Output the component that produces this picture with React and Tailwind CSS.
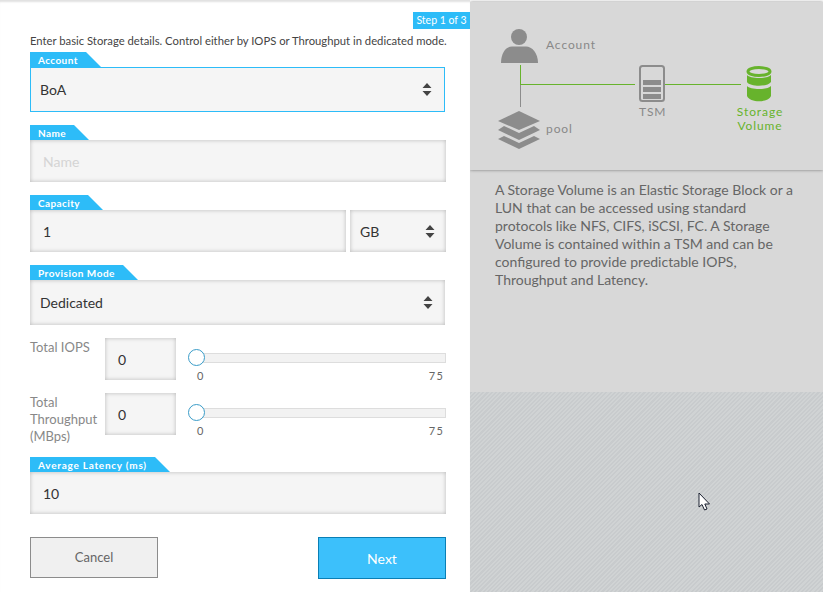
const font = { fontFamily: 'Lato,"Noto Sans",sans-serif' };

function Tag({ children, className }) {
  return (
    <div className={`relative h-[15px] w-fit bg-[#2dbcf8] pl-2 pr-[8px] text-[10px] leading-[17px] font-bold whitespace-nowrap text-white ${className}`}>
      {children}
      <svg className="absolute top-0 left-full" width="15" height="15"><path d="M0 0L15 15H0Z" fill="#2dbcf8" /></svg>
    </div>
  );
}

function Arrows() {
  return (
    <svg width="10" height="13" viewBox="0 0 10 13"><path d="M5 0L9.5 5H.5Z M.5 8H9.5L5 13Z" fill="#444" /></svg>
  );
}

const fieldCls = "flex items-center bg-[#f5f5f5] shadow-[inset_0_0_4px_rgba(0,0,0,0.25)] text-[14px] text-[#333]";

function Slider() {
  return (
    <div className="relative ml-[20px] flex-1 pt-[15px]">
      <div className="h-[10px] border border-[#ddd] bg-[#f2f2f2]" />
      <div className="absolute top-[11px] left-[-8px] h-[17px] w-[17px] rounded-full border-[1.5px] border-[#3a9cc8] bg-white" />
      <div className="mt-[7px] flex justify-between pr-[2px] pl-[1px] text-[11px] leading-[12px] tracking-[1.2px] text-[#666]">
        <span>0</span><span>75</span>
      </div>
    </div>
  );
}

const diagramText = "text-[12px] leading-[14px] tracking-[0.9px] text-[#888]";

function Diagram() {
  return (
    <div className="relative h-[168px] bg-[#d8d8d8] shadow-[0_0_3px_rgba(0,0,0,0.45)]">
      <svg className="absolute top-[26px] left-[28px]" width="42" height="36" viewBox="0 0 42 36">
        <circle cx="21" cy="9" r="8" fill="#8c8c8c" />
        <path d="M3 35C3 25 8 18.500 14 18.500H28C34 18.500 40 25 40 35Z" fill="#8c8c8c" />
      </svg>
      <div className={`absolute top-[36px] left-[76px] ${diagramText}`}>Account</div>
      <div className="absolute top-[63px] left-[50px] h-[21px] w-[1px] bg-[#67b32c]" />
      <div className="absolute top-[83px] left-[50px] h-[22px] w-[1px] bg-[#8c8c8c]" />
      <div className="absolute top-[82px] left-[51px] h-[1px] w-[114px] bg-[#67b32c]" />
      <div className="absolute top-[82px] left-[195px] h-[1px] w-[76px] bg-[#67b32c]" />
      <svg className="absolute top-[108px] left-[27px]" width="44" height="40" viewBox="0 0 44 40">
        <path d="M22 1L43 11L22 20L1 11Z" fill="#8c8c8c" />
        <path d="M7 16L22 23L37 16L43 20L22 30L1 20Z" fill="#8c8c8c" />
        <path d="M7 26L22 33L37 26L43 29L22 39L1 29Z" fill="#8c8c8c" />
      </svg>
      <div className={`absolute top-[120px] left-[76px] ${diagramText}`}>pool</div>
      <svg className="absolute top-[63px] left-[169px]" width="26" height="37" viewBox="0 0 26 37">
        <rect x="1" y="1" width="24" height="35" rx="2.500" fill="none" stroke="#8c8c8c" strokeWidth="2" />
        <rect x="4" y="15" width="18" height="5" fill="#8c8c8c" />
        <rect x="4" y="22" width="18" height="5" fill="#8c8c8c" />
        <rect x="4" y="29" width="18" height="5" fill="#8c8c8c" />
      </svg>
      <div className={`absolute top-[103px] left-[169px] ${diagramText}`}>TSM</div>
      <svg className="absolute top-[64px] left-[276px]" width="26" height="36" viewBox="0 0 26 36">
        <ellipse cx="13" cy="5.500" rx="11" ry="4" fill="none" stroke="#67b32c" strokeWidth="3" />
        <path d="M1 9C4 13 22 13 25 9V16C22 21 4 21 1 16Z" fill="#67b32c" />
        <path d="M1 20C4 24 22 24 25 20V30C22 37 4 37 1 30Z" fill="#67b32c" />
      </svg>
      <div className="absolute top-[103px] left-[251px] w-[78px] text-center text-[12px] leading-[14px] tracking-[0.9px] text-[#67b32c]">Storage<br />Volume</div>
    </div>
  );
}

export default function App() {
  return (
    <div style={font} className="flex h-[592px] w-[823px] overflow-hidden bg-white">
      <div className="w-[470px] shrink-0 shadow-[inset_0_3px_2px_-1px_rgba(0,0,0,0.12)]">
        <div className="flex justify-end pt-[12px]">
          <div className="h-[17px] w-[57px] bg-[#2dbcf8] text-center text-[10.5px] leading-[17px] text-white">Step 1 of 3</div>
        </div>
        <div className="pr-[24px] pl-[30px]">
          <div className="mt-[3px] h-[20px] text-[11.270px] leading-[18px] whitespace-nowrap text-[#444]">Enter basic Storage details. Control either by IOPS or Throughput in dedicated mode.</div>
          <div>
            <Tag className="tracking-[0.4px]">Account</Tag>
            <div className={`${fieldCls} mr-[1px] h-[45px] justify-between border border-[#2dbcf8] pr-[12px] pl-[9px] shadow-none`}>BoA<Arrows /></div>
          </div>
          <div className="mt-[13px]">
            <Tag className="tracking-[0.4px]">Name</Tag>
            <div className={`${fieldCls} h-[42px] px-[13px] text-[#d4d4d4]`}>Name</div>
          </div>
          <div className="mt-[13px]">
            <Tag className="tracking-[0.4px]">Capacity</Tag>
            <div className="flex gap-[4px]">
              <div className={`${fieldCls} h-[42px] flex-1 px-[13px]`}>1</div>
              <div className={`${fieldCls} h-[42px] w-[96px] justify-between pr-[11px] pl-[10px] text-[13px]`}>GB<Arrows /></div>
            </div>
          </div>
          <div className="mt-[13px]">
            <Tag className="tracking-[0.5px]">Provision Mode</Tag>
            <div className={`${fieldCls} mr-[1px] h-[45px] justify-between pr-[12px] pl-[10px] text-[13px]`}>Dedicated<Arrows /></div>
          </div>
          <div className="mt-[13px] flex h-[55px]">
            <div className="w-[75px] pt-[1px] text-[13px] leading-[17px] text-[#888]">Total IOPS</div>
            <div className={`${fieldCls} h-[42px] w-[71px] px-[13px]`}>0</div>
            <Slider />
          </div>
          <div className="flex h-[64px]">
            <div className="w-[75px] pt-[1px] text-[13px] leading-[17px] text-[#888]">Total Throughput (MBps)</div>
            <div className={`${fieldCls} h-[42px] w-[71px] px-[13px]`}>0</div>
            <Slider />
          </div>
          <div>
            <Tag className="tracking-[0.75px]">Average Latency (ms)</Tag>
            <div className={`${fieldCls} h-[42px] px-[13px]`}>10</div>
          </div>
          <div className="mt-[23px] flex justify-between">
            <button className="h-[41px] w-[128px] border border-[#8c8c8c] bg-[#f0f0f0] text-[13px] text-[#666]">Cancel</button>
            <button className="h-[42px] w-[128px] border border-[#0a7fb5] bg-[#3cc0fb] text-[14px] text-white">Next</button>
          </div>
        </div>
      </div>
      <div className="flex w-[353px] flex-col overflow-hidden pt-[2px]">
        <Diagram />
        <div className="h-[222px] bg-[#d8d8d8] pt-[11px] pr-[23px] pl-[25px] text-[14px] leading-[18px] text-[#666]">
          A Storage Volume is an Elastic Storage Block or a LUN that can be accessed using standard protocols like NFS, CIFS, iSCSI, FC. A Storage Volume is contained within a TSM and can be configured to provide predictable IOPS, Throughput and Latency.
        </div>
        <div className="relative flex-1 bg-[repeating-linear-gradient(135deg,#c8cbcd_0px,#c8cbcd_1.500px,#d0d3d4_1.500px,#d0d3d4_3px)]">
          <svg className="absolute top-[100px] left-[228px]" width="13" height="20" viewBox="0 0 13 20">
            <path d="M1 1V15L4 12.500L6.500 18L9 17L6.800 12H11.500Z" fill="#fff" stroke="#1a2030" strokeWidth="1" />
          </svg>
        </div>
      </div>
    </div>
  );
}
